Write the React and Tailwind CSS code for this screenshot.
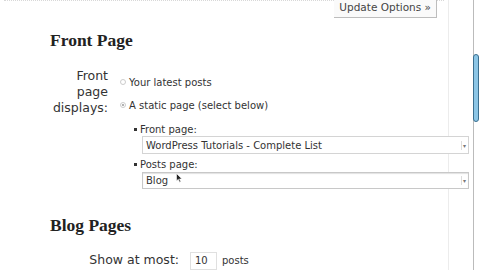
export default function App() {
  const sans = { fontFamily: '"DejaVu Sans", "Liberation Sans", sans-serif' };
  const serif = { fontFamily: '"Liberation Serif", "DejaVu Serif", serif' };
  return (
    <div className="w-[480px] h-[270px] bg-white overflow-hidden flex text-[#333]" style={sans}>
      <div className="w-[449px] shrink-0 h-full border-r border-[#ececec] flex flex-col">
        <div className="h-[3px] mx-[4px] border-t border-dotted border-[#d8d8d8]"></div>
        <div className="flex justify-end pr-[11px] -mt-[3px]">
          <div className="h-[19px] px-[5px] flex items-center border-r border-b border-[#bdbdbd] bg-[#fafafa] text-[10.5px] text-[#444]">
            Update Options »
          </div>
        </div>
        <h2 className="mt-[11px] ml-[50px] text-[17.5px] font-bold text-[#222] leading-[22px]" style={serif}>
          Front Page
        </h2>
        <div className="mt-[17px] flex">
          <div className="w-[108px] shrink-0 text-right text-[12.5px] leading-[16px] text-[#333]">
            Front<br />page<br />displays:
          </div>
          <div className="ml-[12px] pt-[5px] flex flex-col text-[10px] text-[#333]">
            <div className="flex items-center gap-[3px] h-[16px] mt-[1px]">
              <span className="w-[6px] h-[6px] rounded-full border border-[#ccc] bg-white"></span>
              <span>Your latest posts</span>
            </div>
            <div className="flex items-center gap-[3px] h-[16px] mt-[7px]">
              <span className="w-[6px] h-[6px] rounded-full border border-[#ccc] bg-white flex items-center justify-center">
                <span className="w-[2px] h-[2px] rounded-full bg-[#999]"></span>
              </span>
              <span>A static page (select below)</span>
            </div>
            <div className="ml-[14px] mt-[9px] flex flex-col">
              <div className="flex items-center gap-[3px] h-[14px]">
                <span className="w-[3px] h-[3px] bg-[#333]"></span>
                <span>Front page:</span>
              </div>
              <div className="ml-[8px] mt-[0px] w-[327px] h-[18px] border border-[#d4d4d4] bg-white flex items-center justify-between pl-[3px] pr-[2px] text-[10px] text-[#333]">
                <span>WordPress Tutorials - Complete List</span>
                <span className="text-[6px] text-[#777] border-l border-[#ddd] pl-[1px]">▾</span>
              </div>
              <div className="flex items-center gap-[3px] h-[14px] mt-[3px]">
                <span className="w-[3px] h-[3px] bg-[#333]"></span>
                <span>Posts page:</span>
              </div>
              <div className="relative ml-[8px] mt-[1px] w-[327px] h-[17px] border border-[#c8c8c8] bg-white flex items-center justify-between pl-[3px] pr-[2px] text-[10px] text-[#333] shadow-[inset_0_1px_1px_rgba(0,0,0,0.12)]">
                <span>Blog</span>
                <span className="text-[6px] text-[#777] border-l border-[#ddd] pl-[1px]">▾</span>
                <svg className="absolute left-[33px] top-[0px]" width="7" height="10" viewBox="0 0 7 10">
                  <path d="M0.5 0.5 L0.5 8 L2.3 6.3 L3.6 9.2 L4.8 8.7 L3.5 5.9 L6 5.9 Z" fill="#222" stroke="#fff" strokeWidth="0.6" />
                </svg>
              </div>
            </div>
          </div>
        </div>
        <h2 className="mt-[25px] ml-[50px] text-[17.5px] font-bold text-[#222] leading-[22px]" style={serif}>
          Blog Pages
        </h2>
        <div className="mt-[15px] flex items-center">
          <div className="w-[179px] shrink-0 text-right text-[12.5px] text-[#333]">Show at most:</div>
          <div className="ml-[11px] w-[27px] h-[18px] border border-[#e0e0e0] text-[10px] flex items-center pl-[4px]">10</div>
          <div className="ml-[5px] text-[10px]">posts</div>
        </div>
      </div>
      <div className="w-[24px] shrink-0"></div>
      <div className="w-[7px] shrink-0 h-full border-l border-[#bbb] relative">
        <div className="absolute left-[-1px] top-[54px] w-[6px] h-[68px] rounded-[3px] border border-[#3b6f8f] bg-[#8cc6e6]"></div>
      </div>
    </div>
  );
}
